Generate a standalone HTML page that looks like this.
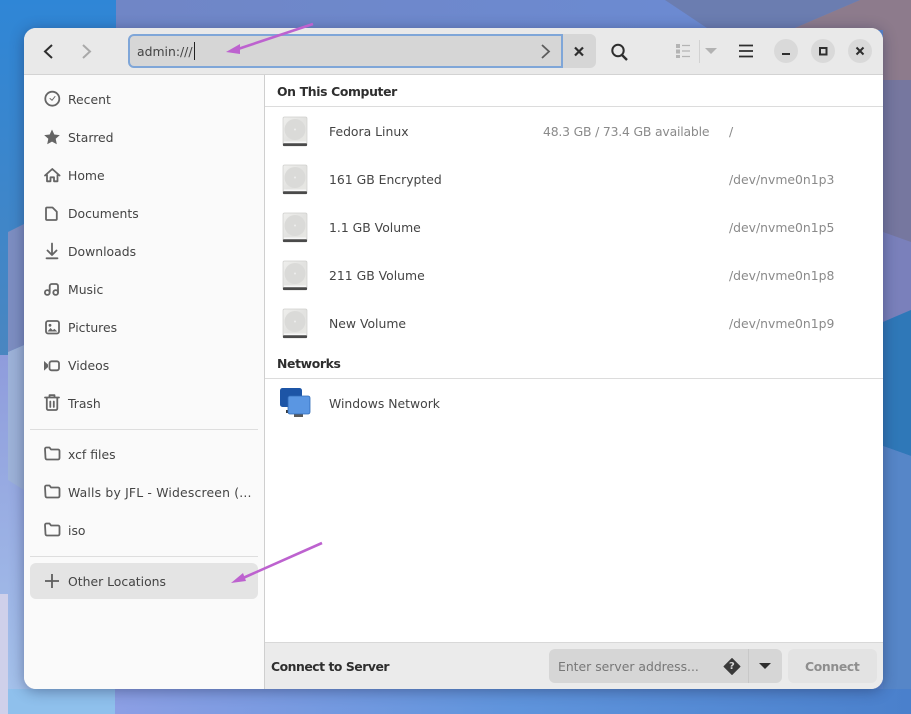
<!DOCTYPE html>
<html><head><meta charset="utf-8"><style>
html,body{margin:0;padding:0;width:911px;height:714px;overflow:hidden;background:#5a86cf}
body{position:relative;font-family:"DejaVu Sans","Liberation Sans",sans-serif;font-size:12.4px;color:#2e2e2e}
.bg{position:absolute;left:0;top:0}
.win{position:absolute;left:24px;top:28px;width:859px;height:661px;border-radius:12px;overflow:hidden;background:#fff;box-shadow:0 2px 14px rgba(30,40,80,.45)}
.t{position:absolute;line-height:20px;white-space:nowrap;margin-top:2px}
.abs{position:absolute}
.b{font-weight:700;letter-spacing:-.35px}
svg.i{position:absolute;overflow:visible}
.s{fill:none;stroke:#656565;stroke-width:1.8;stroke-linecap:round;stroke-linejoin:round}
</style></head><body>
<svg class="bg" width="911" height="714" viewBox="0 0 911 714">
<defs>
<linearGradient id="a" x1="0" y1="0" x2="0" y2="1"><stop offset="0" stop-color="#2f86d6"/><stop offset="1" stop-color="#4a86c0"/></linearGradient>
<linearGradient id="p" x1="0" y1="0" x2="0" y2="1"><stop offset="0" stop-color="#8f9cdc"/><stop offset="1" stop-color="#a6c4ec"/></linearGradient>
<linearGradient id="b" x1="0" y1="0" x2="1" y2="0"><stop offset="0" stop-color="#7086c6"/><stop offset="1" stop-color="#6a8cd6"/></linearGradient>
<linearGradient id="c" x1="0" y1="0" x2="1" y2="0"><stop offset="0" stop-color="#8c9fe4"/><stop offset=".5" stop-color="#5f94dc"/><stop offset="1" stop-color="#4a80cc"/></linearGradient>
<linearGradient id="k" x1="0" y1="0" x2="1" y2="1"><stop offset="0" stop-color="#efefed"/><stop offset=".5" stop-color="#e2e2e0"/><stop offset="1" stop-color="#e8e8e4"/></linearGradient>
</defs>
<rect width="116" height="360" fill="url(#a)"/>
<rect width="116" y="355" height="359" fill="url(#p)"/>
<polygon points="8,232 24,224 24,345 8,352" fill="#7d8ec2"/>
<polygon points="8,352 24,345 24,490 8,480" fill="#9db2d8"/>
<rect x="0" y="594" width="8" height="120" fill="#cfd0ea"/>
<rect x="116" y="0" width="795" height="30" fill="url(#b)"/>
<polygon points="665,0 860,0 790,30 710,30" fill="#6b7db0"/>
<polygon points="790,30 860,0 911,0 911,82 883,90 883,30" fill="#8d7b8c"/>
<rect x="883" y="80" width="28" height="162" fill="#76779f"/>
<polygon points="883,232 911,242 911,310 883,322" fill="#7a80bb"/>
<polygon points="883,322 911,310 911,456 883,446" fill="#2f78b8"/>
<polygon points="883,446 911,456 911,714 883,714" fill="#5686c8"/>
<rect x="115" y="689" width="796" height="25" fill="url(#c)"/>
<rect x="8" y="689" width="107" height="25" fill="#8fc0ec"/>
<rect x="0" y="689" width="8" height="25" fill="#cfd0ea"/>
</svg>

<div class="win">
<div class="abs" style="left:0;top:0;width:859px;height:46px;background:#e9e9e9;border-bottom:1px solid #d3d3d3"></div>
<div class="abs" style="left:0;top:47px;width:240px;height:614px;background:#fafafa;border-right:1px solid #cfcfcf"></div>
<div class="abs" style="left:241px;top:78px;width:618px;height:1px;background:#dcdcdc"></div>
<div class="abs" style="left:241px;top:350px;width:618px;height:1px;background:#dcdcdc"></div>
<div class="abs" style="left:241px;top:614px;width:618px;height:47px;background:#ebebeb;border-top:1px solid #d8d8d8;box-sizing:border-box"></div>
<div class="abs" style="left:6px;top:401px;width:228px;height:1px;background:#dedede"></div>
<div class="abs" style="left:6px;top:528px;width:228px;height:1px;background:#dedede"></div>
<div class="abs" style="left:6px;top:535px;width:228px;height:36px;background:#e4e4e4;border-radius:6px"></div>
</div>

<!-- header controls -->
<div class="abs" style="left:128px;top:34px;width:435px;height:34px;box-sizing:border-box;background:#d6d6d6;border:2px solid #7fa6d8;border-radius:6px 0 0 6px"></div>
<div class="abs" style="left:563px;top:34px;width:33px;height:34px;background:#d6d6d6;border-radius:0 6px 6px 0"></div>
<div class="t" style="left:137px;top:40px;color:#444">admin:///</div>
<div class="abs" style="left:194px;top:42px;width:1px;height:18px;background:#222"></div>

<!-- server bar -->
<div class="abs" style="left:549px;top:649px;width:233px;height:34px;background:#d6d6d6;border-radius:6px"></div>
<div class="abs" style="left:748px;top:649px;width:1px;height:34px;background:#c8c8c8"></div>
<div class="abs" style="left:788px;top:649px;width:89px;height:34px;background:#e3e3e3;border-radius:6px"></div>

<svg class="i" style="left:0;top:0" width="911" height="714" viewBox="0 0 911 714">
<path d="M52 45l-7 6.500 7 6.500" fill="none" stroke="#2e2e2e" stroke-width="2"/>
<path d="M83 45l7 6.500-7 6.500" fill="none" stroke="#a9a9a9" stroke-width="2"/>
<path d="M542 45l7 6.500-7 6.500" fill="none" stroke="#5c5c5c" stroke-width="1.800"/>
<path d="M575 47.500l8 8m0-8l-8 8" fill="none" stroke="#2e2e2e" stroke-width="2.200"/>
<circle cx="618" cy="50.500" r="5.700" fill="none" stroke="#2e2e2e" stroke-width="2"/>
<path d="M622 55l5 5" fill="none" stroke="#2e2e2e" stroke-width="2.400"/>
<path d="M676 44h4v4h-4zM676 49.500h4v4h-4zM676 55h4v3h-4z" fill="#b4b4b4"/>
<path d="M682 45.500h8M682 51h8M682 56.500h8" stroke="#b4b4b4" stroke-width="1.300"/>
<rect x="699" y="40" width="1" height="23" fill="#d2d2d2"/>
<path d="M705 48h12l-6 6z" fill="#b2b2b2"/>
<path d="M739 45.500h14M739 51h14M739 56.500h14" stroke="#2e2e2e" stroke-width="1.800"/>
<circle cx="786" cy="51" r="12" fill="#d9d9d9"/><circle cx="823" cy="51" r="12" fill="#d9d9d9"/><circle cx="860" cy="51" r="12" fill="#d9d9d9"/>
<rect x="782" y="53" width="8" height="2" fill="#2e2e2e"/>
<rect x="820" y="48" width="6.500" height="6.500" fill="none" stroke="#2e2e2e" stroke-width="2"/>
<path d="M856.500 47.500l7 7m0-7l-7 7" fill="none" stroke="#2e2e2e" stroke-width="2"/>

<!-- Sidebar icons -->
<g class="s">
<circle cx="52.300" cy="98.700" r="7"/><path d="M50 98.500l2 1.800 3-3.800" stroke-width="1"/>
<path d="M45 175.500l7.300-6.500 7.300 6.500M47 174.500v6.800h3.500v-4h3.500v4h3.500v-6.800"/>
<path d="M47 207.500h5.500l4.300 4.300v7.200a1 1 0 0 1-1 1H47a1 1 0 0 1-1-1v-10.500a1 1 0 0 1 1-1z"/>
<path d="M52 243.500v11M47.500 250.500l4.500 4.500 4.500-4.500M46.500 258.300h11"/>
<path d="M49.700 292.300v-6.300a2 2 0 0 1 2-2h4.500a2 2 0 0 1 1.800 2v6.300"/><circle cx="47.300" cy="292.500" r="2.400"/><circle cx="55.700" cy="292.500" r="2.400"/>
<rect x="46" y="321" width="13" height="12.500" rx="2"/>
<rect x="49.500" y="361.300" width="9.500" height="9" rx="2"/>
<path d="M45 397.500h14M49.500 397v-1.800h5v1.800M46.800 398v10.500a1.500 1.500 0 0 0 1.500 1.500h7.500a1.500 1.500 0 0 0 1.500-1.500V398M50.300 401.500v5.500M53.800 401.500v5.500"/>
<path d="M45 449a1.500 1.500 0 0 1 1.500-1.500h3l1.500 2h7a1.500 1.500 0 0 1 1.500 1.500v7a1.500 1.500 0 0 1-1.500 1.500h-11a1.500 1.500 0 0 1-1.500-1.500z"/>
<path d="M45 487a1.500 1.500 0 0 1 1.500-1.500h3l1.500 2h7a1.500 1.500 0 0 1 1.500 1.500v7a1.500 1.500 0 0 1-1.500 1.500h-11a1.500 1.500 0 0 1-1.500-1.500z"/>
<path d="M45 525a1.500 1.500 0 0 1 1.500-1.500h3l1.500 2h7a1.500 1.500 0 0 1 1.500 1.500v7a1.500 1.500 0 0 1-1.500 1.500h-11a1.500 1.500 0 0 1-1.500-1.500z"/>
</g>
<path d="M52 129.500l2.300 5 5.500.6-4.100 3.700 1.100 5.500-4.800-2.700-4.800 2.700 1.100-5.500-4.100-3.700 5.500-.6z" fill="#656565"/>
<path d="M44 361l4 3.500v2.600l-4 3.500z" fill="#656565"/>
<path d="M47.500 331.500l3-3.500 2.300 2.200 1.500-1.400 3 2.700z" fill="#656565"/><circle cx="50" cy="325.300" r="1.400" fill="#656565"/>
<path d="M52 574v14M45 581h14" stroke="#5e5e5e" stroke-width="1.800" fill="none"/>

<!-- disks -->
<defs><g id="d">
<rect x="0" y="0" width="24" height="29" rx="1.500" fill="url(#k)" stroke="#cfcfcd" stroke-width=".7"/>
<circle cx="12" cy="12.500" r="10.500" fill="#dadad8"/>
<circle cx="12" cy="12.500" r="1" fill="#eeeeee"/>
<rect x="1" y="24.500" width="22" height="1.800" fill="#f7f7f7"/>
<rect x="0" y="26.300" width="24" height="2.700" rx=".8" fill="#4a4a4a"/>
</g></defs>
<use href="#d" x="283" y="117"/><use href="#d" x="283" y="165"/><use href="#d" x="283" y="213"/><use href="#d" x="283" y="261"/><use href="#d" x="283" y="309"/>

<!-- network -->
<rect x="280" y="388" width="22" height="19" rx="2.500" fill="#1d55a6"/>
<rect x="286" y="410" width="8" height="3" fill="#3a3a3a"/>
<rect x="294" y="412" width="9" height="5" fill="#5b5b5b"/>
<rect x="288" y="396" width="22" height="18" rx="2" fill="#5a96e2" stroke="#2f6bb8" stroke-width=".8"/>

<!-- server -->
<path d="M732 658.500l8 8-8 8-8-8z" fill="#3a3a3a" stroke="#3a3a3a" stroke-linejoin="round"/>
<path d="M759 663h12l-6 6z" fill="#2e2e2e"/>

<!-- arrows -->
<path d="M313 24L238 49" stroke="#bd62cf" stroke-width="2.600" fill="none"/>
<path d="M226 52l14-8 0 10z" fill="#bd62cf"/>
<path d="M322 543L243 578" stroke="#bd62cf" stroke-width="2.600" fill="none"/>
<path d="M231 583l12-10 3 8z" fill="#bd62cf"/>
</svg>

<div class="t" style="left:558px;top:655px;color:#777">Enter server address...</div>
<div class="t b" style="left:805px;top:655px;color:#8e8e8e">Connect</div>
<div class="t b" style="left:271px;top:655px;color:#2e2e2e;letter-spacing:-.47px">Connect to Server</div>
<div class="t b" style="left:729px;top:655px;color:#d6d6d6;font-size:10px">?</div>

<!-- sidebar text -->
<div class="t" style="left:68px;top:88px;color:#444">Recent</div>
<div class="t" style="left:68px;top:126px;color:#444">Starred</div>
<div class="t" style="left:68px;top:164px;color:#444">Home</div>
<div class="t" style="left:68px;top:202px;color:#444">Documents</div>
<div class="t" style="left:68px;top:240px;color:#444">Downloads</div>
<div class="t" style="left:68px;top:278px;color:#444">Music</div>
<div class="t" style="left:68px;top:316px;color:#444">Pictures</div>
<div class="t" style="left:68px;top:354px;color:#444">Videos</div>
<div class="t" style="left:68px;top:392px;color:#444">Trash</div>
<div class="t" style="left:68px;top:443px;color:#444">xcf files</div>
<div class="t" style="left:68px;top:481px;color:#444;letter-spacing:.18px">Walls by JFL - Widescreen (...</div>
<div class="t" style="left:68px;top:519px;color:#444">iso</div>
<div class="t" style="left:68px;top:570px;color:#444">Other Locations</div>

<!-- main text -->
<div class="t b" style="left:277px;top:80px">On This Computer</div>
<div class="t b" style="left:277px;top:352px">Networks</div>
<div class="t" style="left:329px;top:120px;color:#444">Fedora Linux</div>
<div class="t" style="left:329px;top:168px;color:#444">161 GB Encrypted</div>
<div class="t" style="left:329px;top:216px;color:#444">1.1 GB Volume</div>
<div class="t" style="left:329px;top:264px;color:#444">211 GB Volume</div>
<div class="t" style="left:329px;top:312px;color:#444">New Volume</div>
<div class="t" style="left:329px;top:392px;color:#444">Windows Network</div>
<div class="t" style="left:543px;top:120px;color:#8a8a8a;letter-spacing:-.18px">48.3 GB / 73.4 GB available</div>
<div class="t" style="left:729px;top:120px;color:#8a8a8a">/</div>
<div class="t" style="left:729px;top:168px;color:#8a8a8a">/dev/nvme0n1p3</div>
<div class="t" style="left:729px;top:216px;color:#8a8a8a">/dev/nvme0n1p5</div>
<div class="t" style="left:729px;top:264px;color:#8a8a8a">/dev/nvme0n1p8</div>
<div class="t" style="left:729px;top:312px;color:#8a8a8a">/dev/nvme0n1p9</div>
</body></html>
